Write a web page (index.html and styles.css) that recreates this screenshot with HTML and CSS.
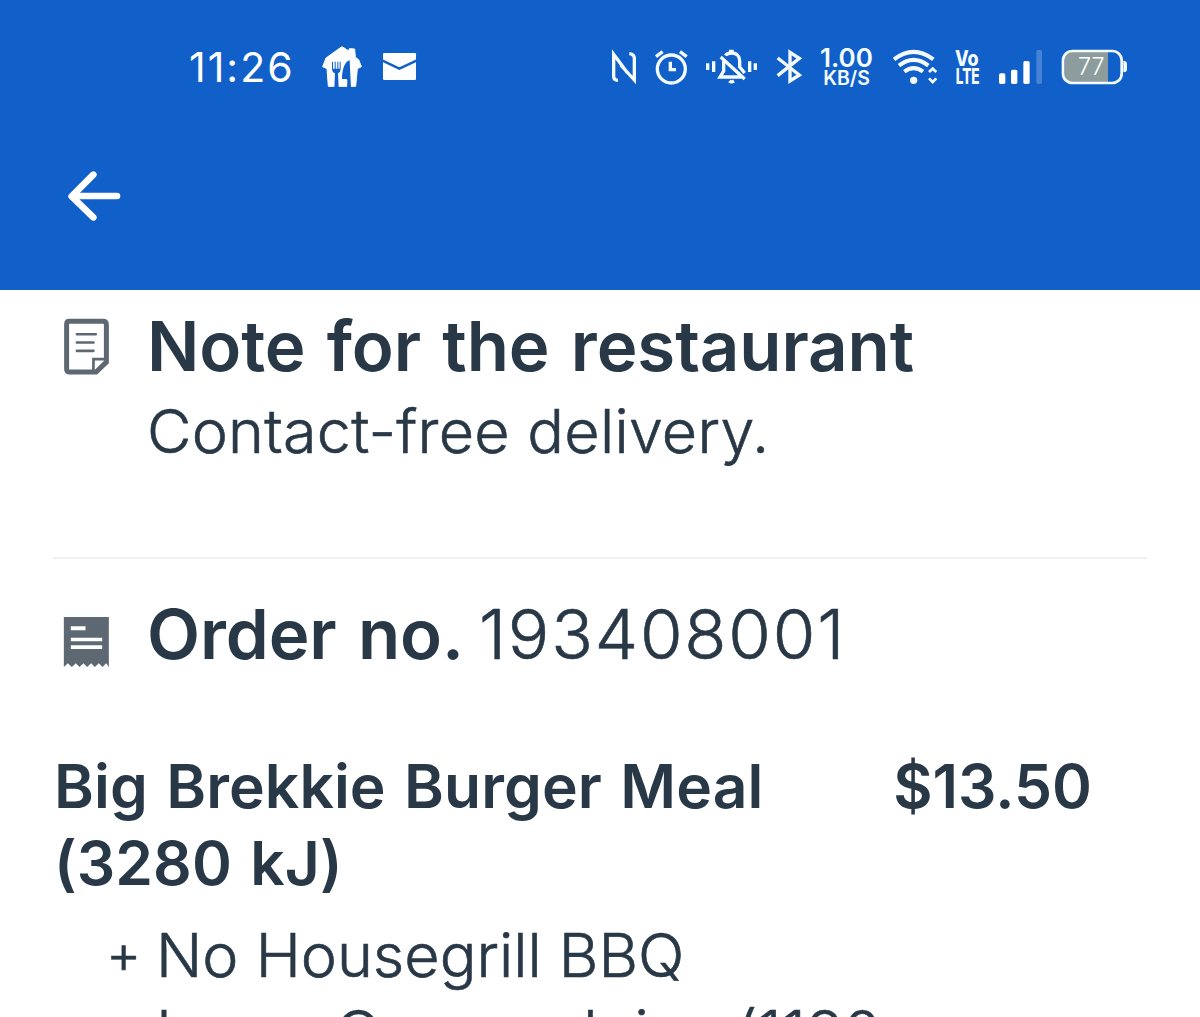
FILE: index.html
```html
<!DOCTYPE html>
<html lang="en">
  <head>
    <meta charset="UTF-8" />
    <title>Order details</title>
    <link rel="stylesheet" href="styles.css">
  </head>
  <body>
    <header>
      <div class="status">
        <span class="time">11:26</span>
        <svg class="house" viewBox="420 30 132 132" width="44" height="44">
          <path fill="#fff" stroke="#fff" stroke-width="3" stroke-linejoin="round" d="M428 95L438 69L484 36H488L506 48L508 41L524 42L526 67L536 74L544 95L532 101L527 154H445L441 101Z"/>
          <!-- fork and knife -->
          <path fill="#115fc9" d="M456 80H459V101H464V80H467V101H472V80H475V101H479V80H482V101Q482 111 474 115L476 158H463L465 115Q456 111 456 101Z"/>
          <path fill="#115fc9" d="M509 76C494 79 486 105 486 132H499Q503 133 502 140L501 158H513L511 120Z"/>
        </svg>
        <svg class="mail" viewBox="606 30 105 132" width="35" height="44">
          <rect x="609" y="54" width="99" height="81" rx="4" fill="#fff"/>
          <path d="M606 76L658 101L711 76" fill="none" stroke="#115fc9" stroke-width="7"/>
        </svg>

        <div class="status-right">
          <!-- nfc -->
          <svg viewBox="33 30 78 132" width="26" height="44" class="line">
            <path d="M54 136Q41 136 41 124V58L82 113M88 56Q103 58 103 70V135L62 90"/>
          </svg>
          <!-- alarm -->
          <svg viewBox="162 30 105 132" width="35" height="44" class="line">
            <circle cx="214" cy="102" r="42"/>
            <path d="M211 80V104H228M168 65L188 50M240 50L260 65"/>
          </svg>
          <!-- silent -->
          <svg viewBox="318 30 156 132" width="52" height="44" class="line">
            <path d="M323 85V105M341 79V111M449 79V111M466 85V105M362 66L434 132M371 78V108L360 126H424M377 62C379 57 386 54 395 54C411 54 419 65 419 77V96L434 114"/>
            <path d="M387 49H401M388 138Q394 143 402 138" />
          </svg>
          <!-- bluetooth -->
          <svg viewBox="525 30 84 132" width="28" height="44" class="line">
            <path d="M533 69L598 120L570 138V52L598 70L533 122"/>
          </svg>
          <div class="speed"><b>1.00</b><span>KB/S</span></div>
          <!-- wifi -->
          <svg viewBox="30 30 144 132" width="48" height="44" class="line">
            <path stroke-width="12" d="M42 73Q101 28 160 73M57 92Q101 57 145 92M73 110Q101 89 129 110"/>
            <circle cx="101" cy="136" r="11" fill="#f4fbff" stroke="none"/>
            <path stroke-width="8" d="M147 111L158 101L169 111M147 130L158 141L169 130"/>
          </svg>
          <!-- VoLTE -->
          <svg viewBox="225 30 78 132" width="26" height="44" class="volte">
            <text x="225" y="94" textLength="71" lengthAdjust="spacingAndGlyphs">Vo</text>
            <text x="227" y="146" textLength="72" lengthAdjust="spacingAndGlyphs">LTE</text>
          </svg>
          <!-- signal -->
          <svg viewBox="354 30 135 132" width="45" height="44" fill="#fff">
            <rect x="357" y="115" width="19" height="32" rx="5"/>
            <rect x="393" y="104" width="19" height="43" rx="5"/>
            <rect x="430" y="78" width="19" height="69" rx="5"/>
            <rect x="469" y="45" width="17" height="102" rx="5" opacity=".22"/>
          </svg>
          <!-- battery -->
          <svg viewBox="540 30 204 132" width="68" height="44">
            <path fill="#8d9d9e" d="M578 50H684V142H578Q553 142 553 117V75Q553 50 578 50Z"/>
            <rect x="549" y="48" width="176" height="96" rx="28" fill="none" stroke="#f4fbff" stroke-width="8"/>
            <path fill="#f4fbff" d="M730 77Q741 77 741 88V102Q741 112 730 112Z"/>
            <text class="percent" x="594" y="120" textLength="80" lengthAdjust="spacingAndGlyphs">77</text>
          </svg>
        </div>
      </div>
      <svg class="back" viewBox="50 40 165 165" width="55" height="55">
        <path d="M129 60L64 125L129 188M66 124H200"/>
      </svg>
    </header>

    <main>
      <section class="note">
        <svg class="icon" viewBox="40 54 140 172" width="47" height="57">
          <path d="M58 64H160Q170 64 170 74V187L139 217H58Q50 217 50 208V73Q50 64 58 64Z" fill="none" stroke="#5d6873" stroke-width="15"/>
          <path d="M131 215V178H170" fill="none" stroke="#5d6873" stroke-width="8"/>
          <path d="M81 103H138M81 128H131M81 153H131" fill="none" stroke="#5d6873" stroke-width="8" stroke-linecap="round"/>
        </svg>
        <div>
          <h2>Note for the restaurant</h2>
          <p>Contact-free delivery.</p>
        </div>
      </section>

      <section class="order">
        <svg class="icon" viewBox="40 48 140 156" width="47" height="52">
          <path fill="#5d6873" d="M42 51H177V201L169 190L158 201L147 190L135 201L124 190L112 201L101 190L89 201L78 190L66 201L54 190L42 201Z"/>
          <path fill="#fff" d="M63 79H107V91H63ZM63 113H157V124H63ZM63 136H157V147H63Z"/>
        </svg>
        <h2>Order no.</h2>
        <span class="number">193408001</span>
      </section>

      <section class="item">
        <h3>Big Brekkie Burger Meal <span class="energy">(3280 kJ)</span></h3>
        <span class="price">$13.50</span>
      </section>
      <div class="options">
        <span class="plus">+</span>
        <p>No Housegrill BBQ<br><span class="juice">Large Orange Juice (1180</span></p>
      </div>
    </main>
  </body>
</html>
```

FILE: styles.css
```css
body {
  display: flex;
  flex-direction: column;
  margin: 0;
  height: 1017px;
  overflow: hidden;
  background-color: #fff;
  color: #293846;
  font-family: Inter, "Liberation Sans", sans-serif;
}

h2,
h3,
p {
  margin: 0;
}

svg {
  display: block;
  flex: none;
  overflow: visible;
}

header {
  flex: none;
  height: 290px;
  background-color: #115fc9;
  color: #fff;
}

.status {
  display: flex;
  align-items: center;
  height: 134px;
  padding: 0 72px 0 189px;
}

.time {
  width: 131px;
  font-size: 41px;
  font-weight: 400;
  letter-spacing: 2px;
  white-space: nowrap;
}

.mail {
  margin-left: 18px;
}

.status-right {
  display: flex;
  align-items: center;
  gap: 17px;
  margin-left: auto;
}

.line {
  fill: none;
  stroke: #f4fbff;
  stroke-width: 10;
}

.speed {
  display: flex;
  flex-direction: column;
  align-items: center;
  width: 53px;
  color: #f4fbff;
  font-weight: 600;
}

.speed b {
  font-size: 26px;
  font-weight: 600;
  line-height: 21px;
}

.speed span {
  font-size: 19.5px;
  font-weight: 600;
  line-height: 20px;
}

.volte {
  fill: #f4fbff;
  font-size: 64px;
  font-weight: 800;
}

.percent {
  fill: #fff;
  font-size: 71px;
  font-weight: 300;
}

.back {
  margin: 34px 0 0 67px;
  fill: none;
  stroke: #fff;
  stroke-width: 20;
  stroke-linecap: round;
  stroke-linejoin: round;
}

main {
  flex: 1;
  min-height: 0;
  padding: 0 53px;
  overflow: hidden;
}

h2 {
  font-size: 69px;
  font-weight: 600;
  line-height: 84px;
  letter-spacing: -0.1px;
  word-spacing: 4px;
  white-space: nowrap;
}

p {
  font-size: 61px;
  font-weight: 300;
  line-height: 77px;
  white-space: nowrap;
}

p,
.number,
.plus {
  -webkit-text-stroke: 0.6px #293846;
}

.note {
  display: flex;
  gap: 37px;
  box-sizing: border-box;
  height: 269px;
  padding: 14px 0 0 10px;
  border-bottom: 2px solid #f0f1f2;
}

.note .icon {
  margin-top: 14px;
}

.note p {
  margin-top: 5px;
  letter-spacing: 0.25px;
}

.order {
  display: flex;
  padding: 33px 0 0 10px;
}

.order .icon {
  margin: 24px 37px 0 0;
}

.number {
  margin-left: 15px;
  font-size: 69px;
  font-weight: 300;
  line-height: 84px;
  letter-spacing: 1.8px;
}

.item {
  display: flex;
  justify-content: space-between;
  margin-top: 72px;
  padding: 0 55px 0 1px;
  font-size: 60.5px;
  font-weight: 600;
  line-height: 76.5px;
}

.item h3 {
  width: 760px;
  font-size: inherit;
  font-weight: inherit;
  letter-spacing: 0.1px;
  word-spacing: 3px;
}

.energy {
  display: block;
}

.options {
  display: flex;
  margin-top: 16px;
  padding-left: 53px;
}

.plus {
  width: 50px;
  font-size: 54px;
  font-weight: 300;
  line-height: 73px;
}

.juice {
  letter-spacing: 0.2px;
}
```
